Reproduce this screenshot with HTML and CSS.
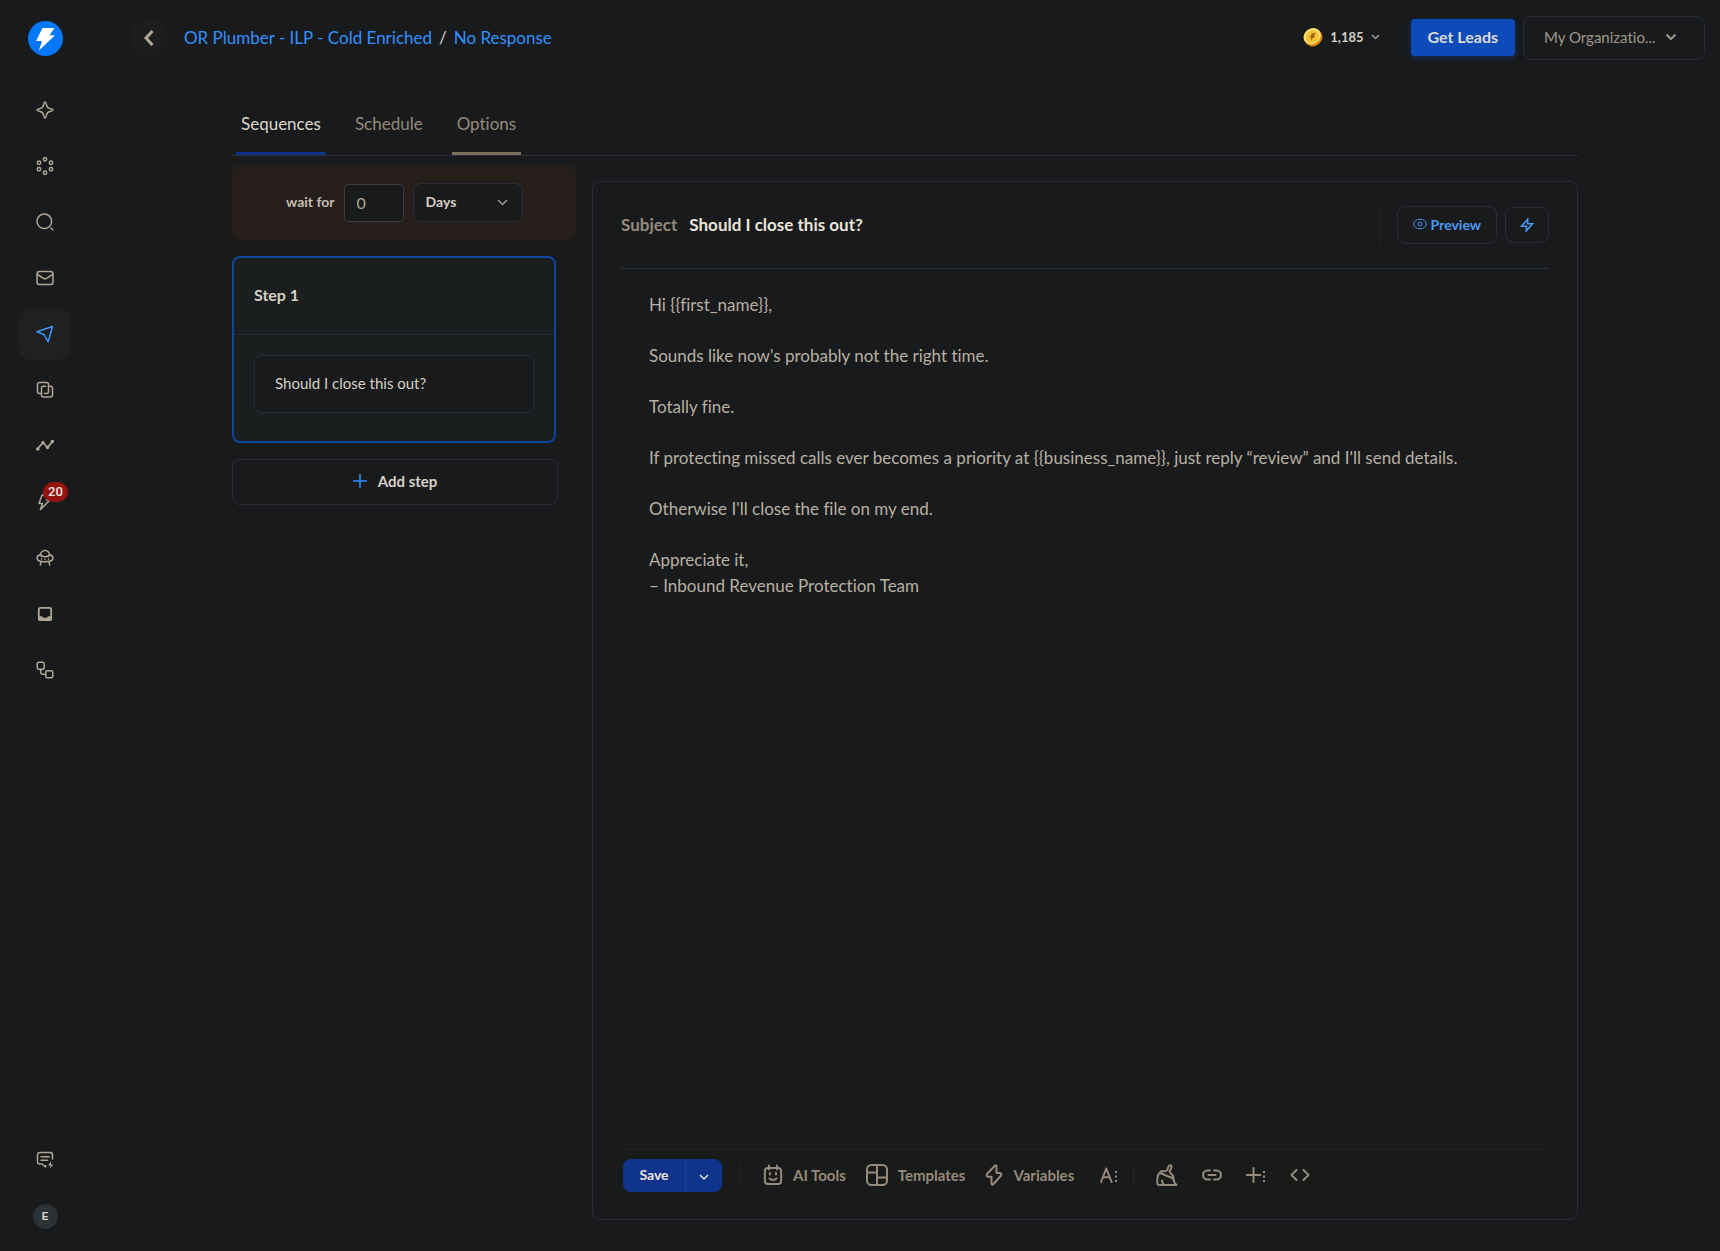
FILE: index.html
```html
<!DOCTYPE html>
<html lang="en">
<head>
    <meta charset="UTF-8">
    <meta name="viewport" content="width=device-width, initial-scale=1">
    <title>No Response</title>
    <link rel="stylesheet" href="styles.css">
</head>
<body>
<div class="layout">
    <nav class="sidebar" aria-label="Main">
        <a class="logo" href="#" aria-label="Home">
            <svg width="35" height="35" viewBox="0 0 35 35"><circle cx="17.500" cy="17.500" r="17.500" fill="#0577fb"/><path d="M14.500 7H26.500L21.500 14.200H27L11 29.500L14 20H8Z" fill="#fff"/></svg>
        </a>
        <div class="menu">
            <a class="menu-item" href="#" aria-label="Copilot">
                <svg class="icon" width="18" height="18" viewBox="0 0 18 18"><path d="M9 1C9.800 1 10 2 10.300 3.600C10.800 6.200 11.800 7.200 14.400 7.700C16 8 17 8.200 17 9S16 10 14.400 10.300C11.800 10.800 10.800 11.800 10.300 14.400C10 16 9.800 17 9 17S8 16 7.700 14.400C7.200 11.800 6.200 10.800 3.600 10.300C2 10 1 9.800 1 9S2 8 3.600 7.700C6.200 7.200 7.200 6.200 7.700 3.600C8 2 8.200 1 9 1Z"/></svg>
            </a>
            <a class="menu-item" href="#" aria-label="Agents">
                <svg class="icon" width="18" height="18" viewBox="0 0 18 18"><circle cx="9" cy="2.300" r="1.700"/><circle cx="3" cy="5.700" r="1.700"/><circle cx="15" cy="5.700" r="1.700"/><circle cx="3" cy="12.300" r="1.700"/><circle cx="15" cy="12.300" r="1.700"/><circle cx="9" cy="15.700" r="1.700"/></svg>
            </a>
            <a class="menu-item" href="#" aria-label="Search">
                <svg class="icon" width="18" height="18" viewBox="0 0 18 18"><circle cx="8.300" cy="8.300" r="7.300"/><path d="M15 15L16.800 16.800"/></svg>
            </a>
            <a class="menu-item" href="#" aria-label="Email accounts">
                <svg class="icon" width="18" height="18" viewBox="0 0 18 18"><rect x="1" y="2.500" width="16" height="13" rx="2.500"/><path d="M1.500 5.500L7.500 9.300Q9 10.200 10.500 9.300L16.500 5.500"/></svg>
            </a>
            <a class="menu-item active" href="#" aria-label="Campaigns">
                <svg class="icon" width="18" height="18" viewBox="0 0 18 18"><path d="M16.500 1.500L1 6.800L8.200 9.800L12.200 16.800Z"/></svg>
            </a>
            <a class="menu-item" href="#" aria-label="Unibox">
                <svg class="icon" width="18" height="18" viewBox="0 0 18 18"><path d="M5.500 12.500H3.500A2 2 0 0 1 1.500 10.500V3.500A2 2 0 0 1 3.500 1.500H10.500A2 2 0 0 1 12.500 3.500V10.500A2 2 0 0 1 10.500 12.500H8.500"/><path d="M12.500 5.300H14.500A2 2 0 0 1 16.500 7.300V14A2 2 0 0 1 14.500 16H7.500A2 2 0 0 1 5.500 14V7.300A2 2 0 0 1 7.500 5.300H9.500"/></svg>
            </a>
            <a class="menu-item" href="#" aria-label="Analytics">
                <svg class="icon" width="18" height="18" viewBox="0 0 18 18"><path d="M1.500 12L7 5.500L11.500 10.500L16.500 4.500" stroke-width="1.800"/><g fill="currentColor" stroke="none"><circle cx="1.800" cy="12" r="1.800"/><circle cx="7" cy="5.800" r="1.800"/><circle cx="11.500" cy="10.500" r="1.800"/><circle cx="16.300" cy="4.500" r="1.800"/></g></svg>
            </a>
            <a class="menu-item" href="#" aria-label="Automations, 20 new">
                <svg class="icon" width="18" height="18" viewBox="0 0 18 18"><path d="M6 2H13L10.500 7H14L4.500 16.500L6.500 10.500H3Z"/></svg>
                <span class="badge">20</span>
            </a>
            <a class="menu-item" href="#" aria-label="Visitors">
                <svg class="icon" width="18" height="18" viewBox="0 0 18 18"><path d="M4.500 6.500C4.500 3.500 6.500 1.500 9 1.500S13.500 3.500 13.500 6.500"/><path d="M4.500 5.500C2.500 6.300 1 7.300 1 9C1 11.500 4.500 12.800 9 12.800S17 11.500 17 9C17 7.300 15.500 6.300 13.500 5.500"/><path d="M4.500 6.500Q9 9 13.500 6.500M5 13L4.300 16M13 13L13.700 16M5.500 9.800V10M9 10.400V10.600M12.500 9.800V10"/></svg>
            </a>
            <a class="menu-item" href="#" aria-label="Inbox">
                <svg class="icon" width="18" height="18" viewBox="0 0 18 18"><rect x="2.800" y="2.800" width="12.400" height="12.400" rx="1.500" stroke-width="1.800"/><path d="M2.500 11.200H6Q6.500 13 9 13T12 11.200H15.500V14.500L14.500 15.500H3.500L2.500 14.500Z" fill="currentColor" stroke="none"/></svg>
            </a>
            <a class="menu-item" href="#" aria-label="Integrations">
                <svg class="icon" width="18" height="18" viewBox="0 0 18 18"><rect x="1.200" y="1.200" width="7" height="7" rx="1.500"/><rect x="9.800" y="9.800" width="7" height="7" rx="1.500"/><path d="M4.700 8.500V11.300Q4.700 13.300 6.700 13.300H9.500"/></svg>
            </a>
        </div>
        <a class="menu-item" href="#" aria-label="Help">
            <svg class="icon" width="18" height="18" viewBox="0 0 18 18"><path d="M16.500 8V3.800A2.300 2.300 0 0 0 14.200 1.500H3.800A2.300 2.300 0 0 0 1.500 3.800V10.700A2.300 2.300 0 0 0 3.800 13H6L9.500 16V14.500M5 5.800H13M5 9.300H11.500"/><path d="M15 10.500L12 14.500H14.500L14 17.500L17.300 13.500H15Z" fill="currentColor" stroke="none"/></svg>
        </a>
        <a class="menu-item" href="#" aria-label="Account"><span class="avatar">E</span></a>
    </nav>

    <div class="page">
        <header class="topbar">
            <button class="back" type="button" aria-label="Back">
                <svg width="10" height="16" viewBox="0 0 10 16"><path d="M8.500 1L2 8L8.500 15"/></svg>
            </button>
            <div class="breadcrumb"><a href="#">OR Plumber - ILP - Cold Enriched</a><span>/</span><a href="#">No Response</a></div>
            <button class="credits" type="button">
                <svg width="20" height="20" viewBox="0 0 20 20"><ellipse cx="10.500" cy="11" rx="9.300" ry="8" transform="rotate(-35 10.500 11)" fill="#d98a14"/><ellipse cx="9.200" cy="9.200" rx="9" ry="7.800" transform="rotate(-35 9.200 9.200)" fill="#fbe06c"/><ellipse cx="9.400" cy="9.600" rx="7" ry="6" transform="rotate(-35 9.400 9.600)" fill="#f3c33a"/><path d="M9 6.500L12.500 5.500L11 8.800H12.500L7.500 13.500L8.300 10.300H6.500Z" fill="#9a6412"/></svg>
                <span>1,185</span>
                <svg class="chevron" width="9" height="6" viewBox="0 0 9 6"><path d="M1 1L4.500 4.500L8 1"/></svg>
            </button>
            <button class="get-leads" type="button">Get Leads</button>
            <button class="org" type="button">
                <span>My Organizatio...</span>
                <svg class="chevron" width="12" height="8" viewBox="0 0 12 8"><path d="M1.500 1.500L6 6L10.500 1.500" stroke-width="2"/></svg>
            </button>
        </header>

        <main class="content">
            <nav class="tabs" aria-label="Campaign">
                <a class="tab current" href="#">Sequences</a>
                <a class="tab" href="#">Schedule</a>
                <a class="tab hover" href="#">Options</a>
            </nav>

            <div class="columns">
                <section class="steps">
                    <div class="wait">
                        <label for="delay">wait for</label>
                        <input id="delay" type="text" inputmode="numeric" value="0">
                        <div class="unit">
                            <select aria-label="Delay unit">
                                <option>Days</option>
                                <option>Hours</option>
                                <option>Minutes</option>
                            </select>
                            <svg class="chevron" width="11" height="7" viewBox="0 0 11 7"><path d="M1 1L5.500 5.500L10 1"/></svg>
                        </div>
                    </div>
                    <div class="step">
                        <h2>Step 1</h2>
                        <div class="step-body">
                            <button class="variant" type="button">Should I close this out?</button>
                        </div>
                    </div>
                    <button class="add-step" type="button">
                        <svg width="14" height="14" viewBox="0 0 14 14"><path d="M7 0V14M0 7H14"/></svg>
                        Add step
                    </button>
                </section>

                <section class="editor">
                    <div class="subject-row">
                        <label for="subject">Subject</label>
                        <input id="subject" type="text" value="Should I close this out?">
                        <div class="subject-actions">
                            <button class="preview" type="button">
                                <svg width="14" height="12" viewBox="0 0 14 12"><ellipse cx="7" cy="6" rx="6.400" ry="4.800"/><circle cx="7" cy="6" r="2"/></svg>
                                Preview
                            </button>
                            <button class="quick" type="button" aria-label="Quick actions">
                                <svg width="14" height="14" viewBox="0 0 14 14"><path d="M7.800 1L1.500 8.200H6.500L6.200 13L12.500 5.800H7.500Z"/></svg>
                            </button>
                        </div>
                    </div>

                    <div class="message" contenteditable="true" role="textbox" aria-multiline="true" aria-label="Message" spellcheck="false">
                        <p>Hi {{first_name}},</p>
                        <p>Sounds like now's probably not the right time.</p>
                        <p>Totally fine.</p>
                        <p>If protecting missed calls ever becomes a priority at {{business_name}}, just reply “review” and I'll send details.</p>
                        <p>Otherwise I'll close the file on my end.</p>
                        <p>Appreciate it,<br>– Inbound Revenue Protection Team</p>
                    </div>

                    <div class="toolbar">
                        <div class="save-group">
                            <button class="save" type="button">Save</button>
                            <button class="save-more" type="button" aria-label="More save options">
                                <svg class="chevron" width="10" height="7" viewBox="0 0 10 7"><path d="M1 1L5 5L9 1"/></svg>
                            </button>
                        </div>
                        <div class="tools main-tools">
                            <button type="button">
                                <svg class="icon" width="20" height="22" viewBox="0 0 20 22"><rect x="1.900" y="3.900" width="16.200" height="16.200" rx="3"/><path d="M6 1.500V5.500M14 1.500V5.500M7 9V10.500M13 9V10.500M6.500 14.500Q10 17.500 13.500 14.500"/></svg>
                                AI Tools
                            </button>
                            <button type="button">
                                <svg class="icon" width="22" height="22" viewBox="0 0 22 22"><rect x="1" y="1" width="20" height="20" rx="4.500"/><path d="M11 1V21M1 8.500H11M11 13.500H21"/></svg>
                                Templates
                            </button>
                            <button type="button">
                                <svg class="icon" width="18" height="22" viewBox="0 0 18 22"><path d="M10 1.500L2 10Q1 12.500 3 12.800H6.500V20Q7 21.500 8.500 20L16 11.500Q17 9.300 15 9H11.500V2Q11 .800 10 1.500Z"/></svg>
                                Variables
                            </button>
                            <button type="button" aria-label="Text style">
                                <svg class="icon" width="18" height="16" viewBox="0 0 18 16"><path d="M1 15L6.300 1.500L11.600 15M3 10.300H9.600"/><g fill="currentColor" stroke="none"><rect x="15" y="4" width="2" height="2"/><rect x="15" y="8.500" width="2" height="2"/><rect x="15" y="13" width="2" height="2"/></g></svg>
                            </button>
                        </div>
                        <div class="tools icon-tools">
                            <button type="button" aria-label="Clear formatting">
                                <svg class="icon" width="22" height="22" viewBox="0 0 22 22"><path d="M5.500 7C1.500 10 .800 15 1.500 19.500Q1.500 21 3 21H20.500C18 19 17.500 16.500 17.500 14.500M4 9L17.500 14.500M5.500 7C8 7.500 10 7.500 11.200 6L12.500 2.500Q14 .300 15.500 2Q15.800 3 15 4.500L13.500 7.500Q14 9 16 10.500Q17.500 11.500 17.500 14.500M6 16.500Q6 19 8 21"/></svg>
                            </button>
                            <button type="button" aria-label="Insert link">
                                <svg class="icon" width="20" height="12" viewBox="0 0 20 12"><path d="M8 1.500H5.500A4.500 4.500 0 0 0 5.500 10.500H8M12 1.500H14.500A4.500 4.500 0 0 1 14.500 10.500H12M6.500 6H13.500"/></svg>
                            </button>
                            <button type="button" aria-label="Insert">
                                <svg class="icon" width="20" height="16" viewBox="0 0 20 16"><path d="M7.500 1V15M.500 8H14.500"/><g fill="currentColor" stroke="none"><rect x="17" y="4" width="2" height="2"/><rect x="17" y="8.500" width="2" height="2"/><rect x="17" y="13" width="2" height="2"/></g></svg>
                            </button>
                            <button type="button" aria-label="Source code">
                                <svg class="icon" width="20" height="12" viewBox="0 0 20 12"><path d="M6.500 1L1.500 6L6.500 11M13.500 1L18.500 6L13.500 11"/></svg>
                            </button>
                        </div>
                    </div>
                </section>
            </div>
        </main>
    </div>
</div>
</body>
</html>
```
FILE: styles.css
```css
* {
    box-sizing: border-box;
}
body {
    margin: 0;
    background: #181a1b;
    color: #d6d0c4;
    font-family: Lato, "Liberation Sans", sans-serif;
    font-size: 16px;
    font-variant-ligatures: none;
}
a {
    text-decoration: none;
}
button, input, select {
    font: inherit;
    font-variant-ligatures: none;
    color: inherit;
    background: none;
    border: 0;
    margin: 0;
    padding: 0;
    outline: none;
}
button {
    cursor: pointer;
}
svg {
    flex: none;
    fill: none;
    stroke: currentColor;
    stroke-width: 1.5;
}
.icon {
    stroke-linecap: round;
    stroke-linejoin: round;
}
.logo svg, .credits svg:first-child {
    stroke: none;
}
.layout {
    display: flex;
    min-height: 100vh;
}

/* sidebar */
.sidebar {
    display: flex;
    flex-direction: column;
    align-items: center;
    gap: 4px;
    width: 91px;
    padding: 21px 0 9px;
    border-right: 1px solid #1c1e1f;
}
.logo {
    height: 35px;
    margin-bottom: 24px;
}
.menu {
    display: flex;
    flex-direction: column;
    gap: 4px;
    flex: 1;
}
.menu-item {
    position: relative;
    display: flex;
    align-items: center;
    justify-content: center;
    width: 52px;
    height: 52px;
    border-radius: 12px;
    color: #b0a696;
}
.menu-item.active {
    background: #1e2021;
    color: #3d94f6;
}
.badge {
    position: absolute;
    top: 6px;
    left: 24px;
    padding: 0 5px;
    border-radius: 10px;
    background: #96140f;
    color: #e8e6e3;
    font: 500 13px/20px Roboto, sans-serif;
}
.avatar {
    width: 25px;
    border-radius: 50%;
    background: #2d3133;
    color: #d8d4cf;
    font: bold 10px/25px "Liberation Sans", sans-serif;
    text-align: center;
}

/* top bar */
.page {
    display: flex;
    flex-direction: column;
    flex: 1;
    min-width: 0;
}
.topbar {
    display: flex;
    align-items: center;
    height: 77px;
    padding: 0 15px 0 39px;
    border-bottom: 1px solid #1c1e1f;
}
.back {
    display: flex;
    align-items: center;
    justify-content: center;
    width: 38px;
    height: 38px;
    border-radius: 50%;
    background: #1b1e1d;
    color: #b0a696;
}
.back svg {
    stroke-width: 3;
}
.breadcrumb {
    display: flex;
    gap: 7px;
    flex: 1;
    padding: 0 0 2px 16px;
    font-size: 17px;
}
.breadcrumb a {
    color: #3391ff;
}
.credits {
    display: flex;
    align-items: center;
    gap: 7px;
    padding-bottom: 2px;
    margin-right: 31px;
    font-size: 13px;
    font-weight: bold;
}
.chevron {
    color: #a0978a;
}
.get-leads {
    height: 37px;
    padding: 0 17px 2px;
    margin: 0 8px 2px 0;
    border-radius: 4px;
    background: #0d4cb8;
    box-shadow: 0 2px 6px rgba(13, 76, 184, 0.4);
    color: #dcdad6;
    font-size: 16px;
    font-weight: bold;
}
.org {
    display: flex;
    align-items: center;
    gap: 9px;
    width: 182px;
    height: 44px;
    padding: 0 20px 2px;
    border: 1px solid #282c38;
    border-radius: 8px;
    color: #a0978a;
    font-size: 15px;
}

/* content */
.content {
    display: flex;
    flex-direction: column;
    flex: 1;
    padding: 0 142px 31px 141px;
}
.tabs {
    display: flex;
    gap: 24px;
    height: 79px;
    padding: 0 4px;
    border-bottom: 1px solid #2b2c39;
}
.tab {
    padding: 36px 5px 0;
    border-bottom: 3px solid transparent;
    color: #958a7b;
    font-size: 17px;
    line-height: 22px;
}
.tab.current {
    border-color: #10318a;
    color: #dcd7cd;
}
.tab.hover {
    border-color: #7d725f;
}
.columns {
    display: flex;
    flex: 1;
    gap: 16px;
}
.steps {
    width: 344px;
    padding-top: 9px;
}
.wait {
    display: flex;
    align-items: center;
    gap: 9px;
    height: 75px;
    padding-left: 54px;
    border-radius: 8px;
    background: #261e1b;
    font-weight: bold;
}
.wait label {
    padding-bottom: 2px;
    color: #c4bcaf;
    font-size: 14px;
}
.wait input {
    width: 60px;
    height: 38px;
    padding: 0 12px;
    border: 1px solid #3a3e41;
    border-radius: 4px;
    background: #181a1b;
    color: #b0a696;
    font-weight: normal;
}
.unit {
    position: relative;
}
.unit select {
    width: 110px;
    height: 39px;
    padding: 0 12px 2px;
    border: 1px solid #2b2f3c;
    border-radius: 8px;
    background: #181a1b;
    appearance: none;
    font-size: 14px;
}
.unit .chevron {
    position: absolute;
    top: 16px;
    right: 15px;
    pointer-events: none;
}
.step {
    margin: 16px 20px 16px 0;
    border: 2px solid #0f449f;
    border-radius: 8px;
    background: #1a1e1e;
}
.step h2 {
    margin: 0;
    padding: 25px 20px 28px;
    border-bottom: 1px solid #292d39;
    font-size: 16px;
    line-height: 23px;
}
.step-body {
    padding: 20px 20px 28px;
}
.variant {
    width: 100%;
    height: 58px;
    padding: 0 20px 2px;
    border: 1px solid #292d39;
    border-radius: 8px;
    background: #181a1b;
    font-size: 15px;
    text-align: left;
}
.add-step {
    display: flex;
    align-items: center;
    justify-content: center;
    gap: 11px;
    width: 326px;
    height: 46px;
    padding-bottom: 2px;
    border: 1px solid #292d39;
    border-radius: 8px;
    font-size: 15px;
    font-weight: bold;
}
.add-step svg {
    color: #3391ff;
}

/* editor */
.editor {
    display: flex;
    flex-direction: column;
    flex: 1;
    min-width: 0;
    margin-top: 25px;
    padding: 0 28px 17px;
    border: 1px solid #292b38;
    border-radius: 8px;
}
.subject-row {
    display: flex;
    align-items: center;
    gap: 12px;
    height: 87px;
    border-bottom: 1px solid #282f3a;
    font-size: 17px;
    font-weight: bold;
}
.subject-row label {
    padding-bottom: 2px;
    color: #958a7b;
}
.subject-row input {
    flex: 1;
    padding-bottom: 2px;
    color: #e8e4da;
}
.subject-actions {
    display: flex;
    align-items: center;
    gap: 8px;
    height: 38px;
    padding-left: 16px;
    border-left: 1px solid #24261f;
    color: #4a9af5;
}
.preview {
    display: flex;
    align-items: center;
    gap: 4px;
    height: 38px;
    padding: 0 15px 2px;
    border: 1px solid #2a2c3c;
    border-radius: 8px;
    font-size: 14px;
}
.preview svg {
    stroke-width: 1;
}
.quick {
    display: flex;
    align-items: center;
    justify-content: center;
    width: 44px;
    height: 36px;
    border: 1px solid #2a2c3c;
    border-radius: 8px;
}
.message {
    flex: 1;
    padding: 23px 28px;
    color: #b8b0a2;
    line-height: 26px;
    font-size: 17px;
    outline: none;
}
.message p {
    margin: 0 0 25px;
}
.toolbar {
    display: flex;
    align-items: flex-start;
    height: 53px;
    padding: 9px 2px 0;
    border-top: 1px solid #1f2122;
    background: #191b1a;
    color: #958a7b;
    font-size: 15px;
    font-weight: bold;
}
.save-group {
    display: flex;
    height: 33px;
    margin-right: 18px;
    border-radius: 8px;
    background: #10348c;
    color: #e8e4da;
    font-size: 14px;
}
.save {
    width: 62px;
    padding-bottom: 2px;
}
.save-more {
    width: 37px;
    border-left: 1px solid #183e8e;
}
.save-more .chevron {
    color: inherit;
}
.tools {
    display: flex;
    align-items: center;
    height: 24px;
    margin-top: 4px;
    border-left: 1px solid #212324;
}
.tools svg {
    stroke-width: 2;
}
.main-tools {
    gap: 20px;
    padding: 0 15px 0 22px;
}
.main-tools button:last-child {
    padding-left: 6px;
}
.icon-tools {
    gap: 24px;
    padding-left: 22px;
}
.tools button {
    display: flex;
    align-items: center;
    gap: 10px;
}
```
